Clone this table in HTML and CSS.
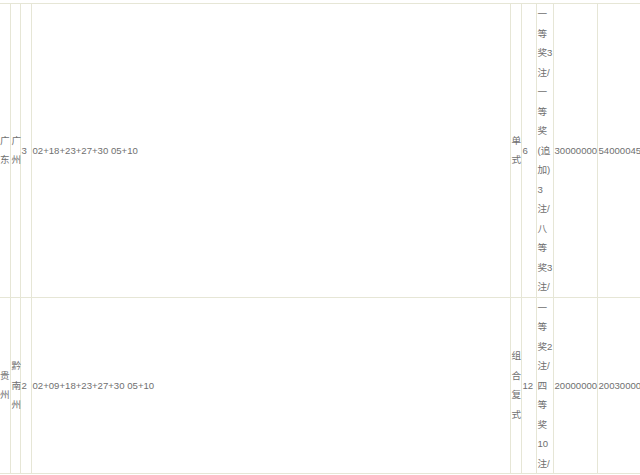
FILE: index.html
```html
<!DOCTYPE html>
<html lang="zh-CN">
<head>
  <meta charset="UTF-8">
  <meta name="viewport" content="width=device-width, initial-scale=1.0">
  <title>中奖明细</title>
  <link rel="stylesheet" href="styles.css">
</head>
<body>
  <table class="prize-table">
    <colgroup>
      <col class="col-prov">
      <col class="col-city">
      <col class="col-count">
      <col class="col-nums">
      <col class="col-type">
      <col class="col-bets">
      <col class="col-detail">
      <col class="col-amount">
      <col class="col-total">
    </colgroup>
    <tbody>
      <tr>
        <td>广东</td>
        <td>广州</td>
        <td>3</td>
        <td>02+18+23+27+30 05+10</td>
        <td>单式</td>
        <td>6</td>
        <td class="detail">一等奖3注/一等奖(追加)<wbr>3注/八等奖3注/</td>
        <td>30000000</td>
        <td>54000045</td>
      </tr>
      <tr>
        <td>贵州</td>
        <td>黔南州</td>
        <td>2</td>
        <td>02+09+18+23+27+30 05+10</td>
        <td>组合复式</td>
        <td>12</td>
        <td class="detail">一等奖2注/四等奖10注/</td>
        <td>20000000</td>
        <td>20030000</td>
      </tr>
    </tbody>
  </table>
</body>
</html>
```

FILE: styles.css
```css
html, body {
  overflow: hidden;
}

body {
  margin: 0;
  padding-top: 3px;
  font-family: "Liberation Sans", "Noto Sans CJK SC", sans-serif;
  font-size: 9.6px;
  line-height: 19.5px;
  color: #707070;
  background-color: #fff;
}

.prize-table {
  width: 640px;
  table-layout: fixed;
  border-collapse: collapse;
}

.prize-table td {
  border: 1px solid #e6e6d6;
  padding: 0 0 0 1px;
  vertical-align: middle;
  text-align: left;
}

.col-prov { width: 10px; }
.col-city { width: 10px; }
.col-count { width: 11px; }
.col-nums { width: 479px; }
.col-type { width: 11px; }
.col-bets { width: 15px; }
.col-detail { width: 17px; }
.col-amount { width: 44px; }
.col-total { width: 43px; }

.prize-table td:first-child {
  border-left: none;
  padding-left: 0;
}
```
